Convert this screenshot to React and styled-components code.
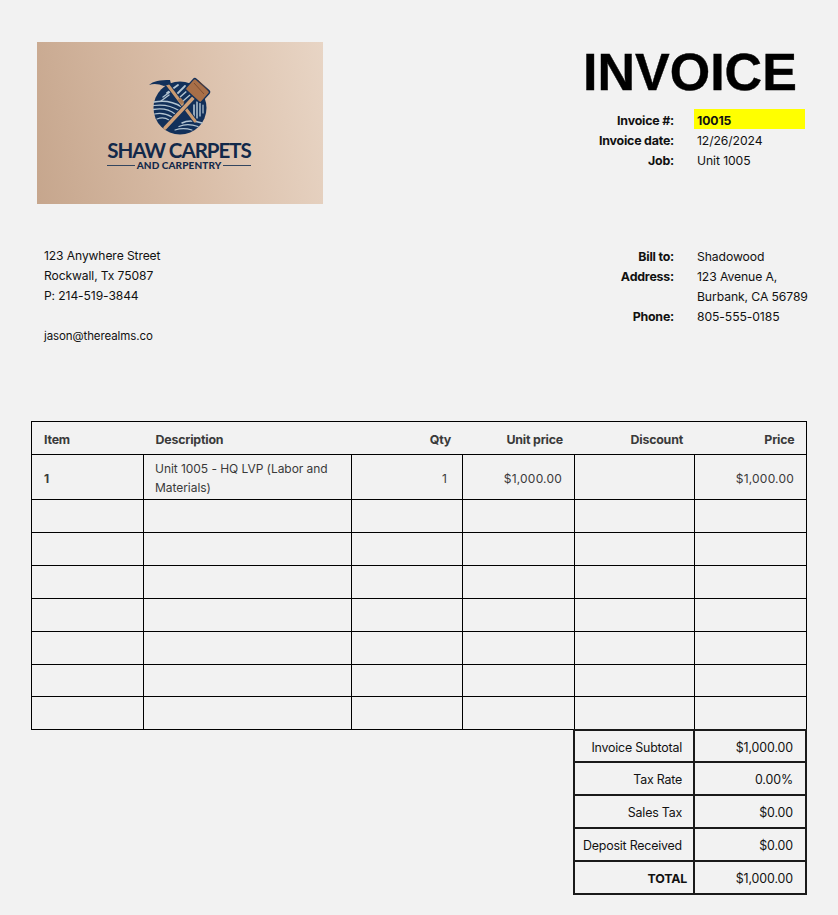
import React from 'react'
import styled, {createGlobalStyle} from 'styled-components'

const items = [
  {item: '1', description: 'Unit 1005 - HQ LVP (Labor and Materials)', qty: '1', unit: '$1,000.00', discount: '', price: '$1,000.00', height: 45},
  {height: 33},
  {height: 33},
  {height: 33},
  {height: 33},
  {height: 33},
  {height: 32},
  {height: 33},
]

const totals = [
  ['Invoice Subtotal', '$1,000.00', false, 32],
  ['Tax Rate', '0.00%', false, 33],
  ['Sales Tax', '$0.00', false, 33],
  ['Deposit Received', '$0.00', false, 33],
  ['TOTAL', '$1,000.00', true, 33],
]

function Emblem() {
  return (
    <svg width="68" height="60" viewBox="0 0 68 60">
      <circle cx="34" cy="32" r="26.5" fill="#12305a" />
      <g fill="none" stroke="#b4c5d2" strokeLinecap="round">
        <path d="M8 26 C18 24 28 26 36 31" strokeWidth="1.5" />
        <path d="M7.5 29.5 C18 28 26 30 33 34.5" strokeWidth="1.2" />
        <path d="M7.5 33.5 C16 32 24 34 29 38" strokeWidth="1.3" />
        <path d="M8.5 38 C15 36.5 21 38 26 41" strokeWidth="1.2" />
        <path d="M11 43 C16 41 20 42 23 44" strokeWidth="1.2" />
        <path d="M36 47 C43 43 50 45 56 47" strokeWidth="1.5" />
        <path d="M33 50.5 C40 47.5 46 48.5 52 50.5" strokeWidth="1.3" />
        <path d="M29 54 C35 52 41 52.5 46 54" strokeWidth="1.1" />
        <path d="M21 17 L32 9" strokeWidth="1.8" />
        <path d="M17 21 L26 14.5" strokeWidth="1.4" />
        <path d="M15 25 L23 19" strokeWidth="1.4" />
        <path d="M31 18 L39 10" strokeWidth="1.8" />
        <path d="M33 22 L42 14" strokeWidth="1.5" />
        <path d="M37 25 L44 19" strokeWidth="1.3" />
        <path d="M48 29 L48 44" strokeWidth="1.6" />
        <path d="M51 26 L51 42" strokeWidth="1.5" />
        <path d="M54 26 L54 40" strokeWidth="1.4" />
        <path d="M57 29 L57 37" strokeWidth="1.2" />
      </g>
      <path d="M49 45 L21 8" stroke="#12305a" strokeWidth="5" />
      <path d="M49 45 L21 8" stroke="#c99a70" strokeWidth="3" strokeLinecap="round" />
      <path d="M19 52 L49 20" stroke="#12305a" strokeWidth="5.4" />
      <path d="M19 52 L49 20" stroke="#cfa078" strokeWidth="3.4" strokeLinecap="round" />
      <path d="M3 9 C7 5 14 4 24 4 L25 8 L18 10 C13 8 8 7 3 9 Z" fill="#12305a" />
      <rect x="41" y="7" width="21" height="15" rx="2" fill="#a86f48" stroke="#12305a" strokeWidth="1.4" transform="rotate(42 51.5 14.5)" />
      <path d="M48 7 L58 18 M52 4 L62 15" stroke="#7d4d31" strokeWidth="1" />
      <rect x="32" y="23" width="6" height="4" fill="#a87a56" transform="rotate(50 35 25)" />
    </svg>
  )
}

function App() {
  return (
    <Page>
      <GlobalStyle />
      <Header>
        <Logo>
          <Emblem />
          <BrandName>SHAW CARPETS</BrandName>
          <BrandSub>
            <BrandRule />
            <span>AND CARPENTRY</span>
            <BrandRule />
          </BrandSub>
        </Logo>
        <InvoiceSide>
          <Title>INVOICE</Title>
          <MetaGrid>
            <MetaLabel>Invoice #:</MetaLabel>
            <MetaValue $highlight>10015</MetaValue>
            <MetaLabel>Invoice date:</MetaLabel>
            <MetaValue>12/26/2024</MetaValue>
            <MetaLabel>Job:</MetaLabel>
            <MetaValue>Unit 1005</MetaValue>
          </MetaGrid>
        </InvoiceSide>
      </Header>

      <Parties>
        <Sender>
          <SenderLine>123 Anywhere Street</SenderLine>
          <SenderLine>Rockwall, Tx 75087</SenderLine>
          <SenderLine>P: 214-519-3844</SenderLine>
          <SenderLine />
          <Email>jason@therealms.co</Email>
        </Sender>
        <BillGrid>
          <MetaLabel>Bill to:</MetaLabel>
          <MetaValue>Shadowood</MetaValue>
          <MetaLabel>Address:</MetaLabel>
          <MetaValue>123 Avenue A,</MetaValue>
          <MetaLabel />
          <MetaValue>Burbank, CA 56789</MetaValue>
          <MetaLabel>Phone:</MetaLabel>
          <MetaValue>805-555-0185</MetaValue>
        </BillGrid>
      </Parties>

      <ItemsTable>
        <colgroup>
          <col style={{width: 112}} />
          <col style={{width: 208}} />
          <col style={{width: 111}} />
          <col style={{width: 112}} />
          <col style={{width: 120}} />
          <col style={{width: 112}} />
        </colgroup>
        <thead>
          <tr>
            <HeadCell>Item</HeadCell>
            <HeadCell>Description</HeadCell>
            <HeadCell $right>Qty</HeadCell>
            <HeadCell $right>Unit price</HeadCell>
            <HeadCell $right>Discount</HeadCell>
            <HeadCell $right>Price</HeadCell>
          </tr>
        </thead>
        <tbody>
          {items.map((row, i) => (
            <ItemRow key={i} $height={row.height}>
              <ItemNo>{row.item}</ItemNo>
              <Cell>{row.description}</Cell>
              <QtyCell $right>{row.qty}</QtyCell>
              <Cell $right>{row.unit}</Cell>
              <Cell $right>{row.discount}</Cell>
              <Cell $right>{row.price}</Cell>
            </ItemRow>
          ))}
        </tbody>
      </ItemsTable>

      <TotalsTable>
        <colgroup>
          <col style={{width: 120}} />
          <col style={{width: 112}} />
        </colgroup>
        <tbody>
          {totals.map(([label, value, strong, height]) => (
            <TotalRow key={label} $height={height}>
              <TotalLabel $strong={strong}>{label}</TotalLabel>
              <TotalValue>{value}</TotalValue>
            </TotalRow>
          ))}
        </tbody>
      </TotalsTable>
    </Page>
  )
}

const GlobalStyle = createGlobalStyle`
  body {
    margin: 0;
    background: #f2f2f2;
    font-family: "Inter", "Liberation Sans", sans-serif;
    font-size: 12px;
    color: #000;
  }
`

const Page = styled.div`
  width: 838px;
  height: 915px;
  box-sizing: border-box;
  padding: 42px 0 0 31px;
  overflow: hidden;
`

const Header = styled.header`
  display: flex;
  justify-content: space-between;
  padding-left: 6px;
`

const Logo = styled.div`
  width: 286px;
  height: 162px;
  box-sizing: border-box;
  padding-top: 34px;
  display: flex;
  flex-direction: column;
  align-items: center;
  color: #12294a;
  background: linear-gradient(78deg, #c6a68d 0%, #d9bda7 50%, #e8d5c5 100%);
`

const BrandName = styled.div`
  margin-top: 4px;
  margin-right: 2px;
  width: 144px;
  font-family: "Lato", sans-serif;
  font-size: 20.5px;
  line-height: 20px;
  font-weight: 700;
  letter-spacing: -1px;
  white-space: nowrap;
  text-align: center;
`

const BrandSub = styled.div`
  margin-right: 2px;
  width: 144px;
  display: flex;
  align-items: center;
  gap: 2px;
  font-family: "Lato", sans-serif;
  font-size: 10px;
  line-height: 11px;
  font-weight: 900;
  letter-spacing: 0.1px;
  white-space: nowrap;
`

const BrandRule = styled.i`
  flex: 1;
  height: 1px;
  background: #33465f;
`

const InvoiceSide = styled.div`
  width: 256px;
  margin-right: 31px;
`

const Title = styled.h1`
  margin: 0 0 0 32px;
  font-family: "Liberation Sans", Arial, sans-serif;
  font-size: 52px;
  line-height: 60px;
  font-weight: 700;
  -webkit-text-stroke: 0.4px #000;
  white-space: nowrap;
`

const MetaGrid = styled.div`
  margin-top: 7px;
  display: grid;
  grid-template-columns: 143px 111px;
  grid-auto-rows: 20px;
  column-gap: 0;
`

const MetaLabel = styled.div`
  padding-right: 20px;
  text-align: right;
  font-weight: 700;
  font-size: 12.4px;
  letter-spacing: -0.2px;
  line-height: 24px;
  height: 20px;
  color: #111;
`

const MetaValue = styled.div`
  padding-left: 3px;
  line-height: 24px;
  height: 20px;
  font-size: 12.2px;
  letter-spacing: -0.1px;
  color: #111;
  white-space: nowrap;
  background: ${p => (p.$highlight ? '#ffff00' : 'transparent')};
  font-weight: ${p => (p.$highlight ? 700 : 400)};
`

const Parties = styled.section`
  margin-top: 41px;
  display: flex;
  justify-content: space-between;
  height: 176px;
`

const Sender = styled.div`
  padding-left: 13px;
`

const SenderLine = styled.div`
  height: 20px;
  line-height: 22px;
  font-size: 12.1px;
  letter-spacing: -0.1px;
  color: #111;
`

const Email = styled(SenderLine)`
  font-size: 11.5px;
`

const BillGrid = styled(MetaGrid)`
  margin-top: 0;
  margin-right: 34px;
  grid-template-columns: 143px 110px;
`

const ItemsTable = styled.table`
  width: 775px;
  table-layout: fixed;
  border-collapse: collapse;
  border-top: 1px solid #000;
  border-left: 1px solid #000;
  border-right: 1px solid #000;
  color: #3a3a3a;
`

const HeadCell = styled.th`
  height: 33px;
  box-sizing: border-box;
  padding: 2px 11.5px 0 12px;
  text-align: ${p => (p.$right ? 'right' : 'left')};
  font-size: 12.4px;
  font-weight: 700;
  letter-spacing: -0.2px;
  border-bottom: 1px solid #000;
`

const ItemRow = styled.tr`
  height: ${p => p.$height}px;
`

const Cell = styled.td`
  box-sizing: border-box;
  padding: 2px 12px 0 11px;
  border: 1px solid #000;
  line-height: 19px;
  font-size: 12px;
  letter-spacing: ${p => (p.$right ? '0.2px' : '-0.05px')};
  text-align: ${p => (p.$right ? 'right' : 'left')};
`

const ItemNo = styled(Cell)`
  padding-left: 12px;
  font-weight: 700;
`

const QtyCell = styled(Cell)`
  padding-right: 15px;
`

const TotalsTable = styled.table`
  margin: -1px 0 0 542px;
  width: 232px;
  table-layout: fixed;
  border-collapse: collapse;
  color: #111;
`

const TotalRow = styled.tr`
  height: ${p => p.$height}px;
`

const TotalLabel = styled.td`
  box-sizing: border-box;
  padding: 2px ${p => (p.$strong ? 6 : 11)}px 0 0;
  border: 2px solid #1a1a1a;
  text-align: right;
  font-size: 12.4px;
  letter-spacing: -0.2px;
  white-space: nowrap;
  font-weight: ${p => (p.$strong ? 700 : 400)};
`

const TotalValue = styled(TotalLabel)`
  padding-right: 12px;
  letter-spacing: -0.1px;
`

export default App
